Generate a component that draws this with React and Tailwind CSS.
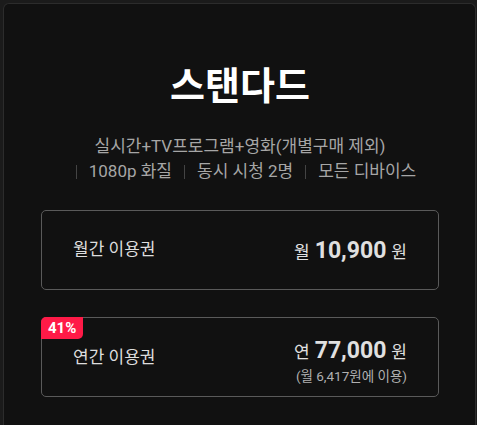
import React from 'react';

const plans = [
  { name: '월간 이용권', unit: '월', price: '10,900', note: null, badge: null },
  { name: '연간 이용권', unit: '연', price: '77,000', note: '(월 6,417원에 이용)', badge: '41%' },
];

const features = ['1080p 화질', '동시 시청 2명', '모든 디바이스'];

const App = () => {
  return (
    <div
      className="min-h-screen bg-[#1b1b1b] pl-[3px] pr-[1px] pt-[3px]"
      style={{ fontFamily: 'Roboto, "Noto Sans CJK KR", sans-serif' }}
    >
      <div className="h-[430px] rounded-t-md border border-b-0 border-[#2c2c2c] bg-[#111111] pl-[37px] pr-[36px] pt-[50px]">
        <h1 className="text-center text-[38px] font-bold leading-[64px] text-white">스탠다드</h1>
        <p className="mt-[16px] text-center text-[17px] leading-[25px] text-[#a6a6a6]">
          실시간+TV프로그램+영화(개별구매 제외)
        </p>
        <div className="flex items-center justify-center text-[17px] leading-[25px] text-[#a6a6a6]">
          {features.map((f) => (
            <span key={f} className="flex items-center">
              <span className="mx-[12px] h-[14px] w-px bg-[#444]" />
              {f}
            </span>
          ))}
        </div>

        <div className="mt-[26px] flex flex-col gap-[27px]">
          {plans.map((p) => (
            <div
              key={p.name}
              className="relative flex h-[80px] items-center justify-between rounded-[5px] border border-[#5a5a5a] px-[31px]"
            >
              {p.badge && (
                <span className="absolute left-[-1px] top-[-1px] rounded-br-[5px] rounded-tl-[5px] bg-[#ff1a47] px-[7px] text-[15px] font-bold leading-[22px] text-white">
                  {p.badge}
                </span>
              )}
              <span className={`text-[17px] text-[#dedede] ${p.note ? 'mt-[2px]' : ''}`}>{p.name}</span>
              <div className={`flex flex-col items-end ${p.note ? 'mt-[6px]' : 'mt-[2px]'}`}>
                <div className="flex items-baseline leading-[30px] text-[#e0e0e0]">
                  <span className="text-[17px]">{p.unit}</span>
                  <span className="mx-[5px] text-[23px] font-bold">{p.price}</span>
                  <span className="text-[17px]">원</span>
                </div>
                {p.note && (
                  <span className="text-[13.5px] leading-[18px] text-[#b0b0b0]">{p.note}</span>
                )}
              </div>
            </div>
          ))}
        </div>
      </div>
    </div>
  );
};

export default App;
